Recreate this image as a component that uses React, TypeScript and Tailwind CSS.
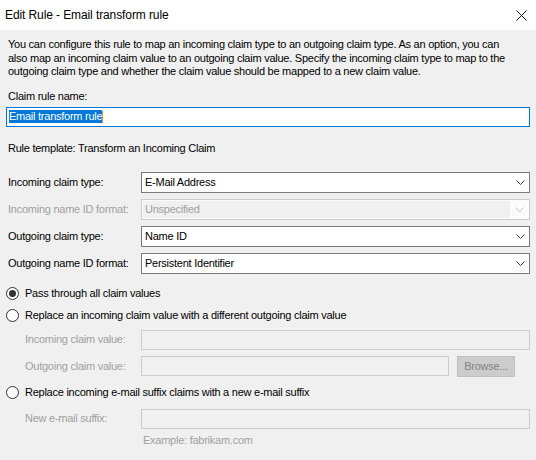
import React from 'react';

const Chevron = ({ disabled }: { disabled?: boolean }) => (
  <svg width="9" height="5" viewBox="0 0 9 5" className="shrink-0">
    <polyline points="0.5,0.5 4.5,4.5 8.5,0.5" fill="none" stroke={disabled ? '#c4c4c4' : '#3c3c3c'} strokeWidth="1" />
  </svg>
);

function Combo({ value, disabled }: { value: string; disabled?: boolean }) {
  if (disabled) {
    return (
      <div className="flex h-[21px] w-[389px] items-center border border-[#cccccc] bg-[#fcfcfc] p-[1px]">
        <div className="flex h-full flex-1 items-center bg-[#f0f0f0] pl-[2px] text-[#a0a0a0]">{value}</div>
        <div className="flex w-[18px] justify-center">
          <Chevron disabled />
        </div>
      </div>
    );
  }
  return (
    <div className="flex h-[21px] w-[389px] items-center border border-[#7a7a7a] bg-white pl-[3px]">
      <span className="flex-1 text-black">{value}</span>
      <div className="flex w-[18px] justify-center">
        <Chevron />
      </div>
    </div>
  );
}

function Radio({ checked, label }: { checked?: boolean; label: string }) {
  return (
    <div className="flex h-[13px] items-center gap-[6px]">
      <span className="flex h-[13px] w-[13px] items-center justify-center rounded-full border border-[#333333] bg-white">
        {checked && <span className="h-[7px] w-[7px] rounded-full bg-[#333333]" />}
      </span>
      <span className="text-black">{label}</span>
    </div>
  );
}

function Field({ label, children }: { label: string; children: React.ReactNode }) {
  return (
    <div className="flex items-center">
      <span className="w-[135px] pl-[19px] text-[#a0a0a0]">{label}</span>
      {children}
    </div>
  );
}

const DisabledBox = ({ width }: { width: string }) => (
  <div className={`h-[20px] ${width} border border-[#cccccc] bg-[#f0f0f0]`} />
);

export default function App() {
  const rows = [
    { label: 'Incoming claim type:', value: 'E-Mail Address' },
    { label: 'Incoming name ID format:', value: 'Unspecified', disabled: true },
    { label: 'Outgoing claim type:', value: 'Name ID' },
    { label: 'Outgoing name ID format:', value: 'Persistent Identifier' },
  ];

  return (
    <div className="h-[460px] w-[536px] overflow-hidden bg-[#f0f0f0] text-[11px] leading-[13px] tracking-[-0.25px] text-black [font-family:'Liberation_Sans',Arial,sans-serif]">
      <div className="flex h-[30px] items-center justify-between bg-white pl-[5px] pr-[4px]">
        <span className="text-[12px] tracking-[-0.1px]">Edit Rule - Email transform rule</span>
        <svg width="11" height="11" viewBox="0 0 11 11" className="mr-[5px]">
          <path d="M0.5 0.5 L10.5 10.5 M10.5 0.5 L0.5 10.5" stroke="#111111" strokeWidth="1" />
        </svg>
      </div>

      <div className="px-[6px]">
        <p className="mt-[8px] pl-[2px] pr-[20px] leading-[13.5px]">
          You can configure this rule to map an incoming claim type to an outgoing claim type. As an option, you can
          also map an incoming claim value to an outgoing claim value. Specify the incoming claim type to map to the
          outgoing claim type and whether the claim value should be mapped to a new claim value.
        </p>

        <div className="mt-[11px] pl-[2px]">Claim rule name:</div>
        <div className="mt-[4px] flex h-[20px] items-center border border-[#0078d7] bg-white pl-[2px]">
          <span className="bg-[#0078d7] text-white">Email transform rule</span>
          <span className="h-[12px] w-[1px] bg-[#ff8728]" />
        </div>

        <div className="mt-[15px] pl-[2px]">Rule template: Transform an Incoming Claim</div>

        <div className="mt-[17px] flex flex-col gap-[6px]">
          {rows.map((r) => (
            <div key={r.label} className="flex items-center">
              <span className={`w-[135px] pl-[2px] ${r.disabled ? 'text-[#a0a0a0]' : ''}`}>{r.label}</span>
              <Combo value={r.value} disabled={r.disabled} />
            </div>
          ))}
        </div>

        <div className="mt-[13px] flex flex-col gap-[9px]">
          <Radio checked label="Pass through all claim values" />
          <Radio label="Replace an incoming claim value with a different outgoing claim value" />
        </div>

        <div className="mt-[8px] flex flex-col gap-[6px]">
          <Field label="Incoming claim value:">
            <DisabledBox width="w-[389px]" />
          </Field>
          <Field label="Outgoing claim value:">
            <DisabledBox width="w-[308px]" />
            <div className="ml-[8px] flex h-[21px] w-[58px] items-center justify-center border border-[#bfbfbf] bg-[#cccccc] text-[#838383]">
              Browse...
            </div>
          </Field>
        </div>

        <div className="mt-[9px]">
          <Radio label="Replace incoming e-mail suffix claims with a new e-mail suffix" />
        </div>

        <div className="mt-[10px]">
          <Field label="New e-mail suffix:">
            <DisabledBox width="w-[389px]" />
          </Field>
        </div>

        <div className="mt-[5px] pl-[137px] text-[#a0a0a0]">Example: fabrikam.com</div>
      </div>
    </div>
  );
}
